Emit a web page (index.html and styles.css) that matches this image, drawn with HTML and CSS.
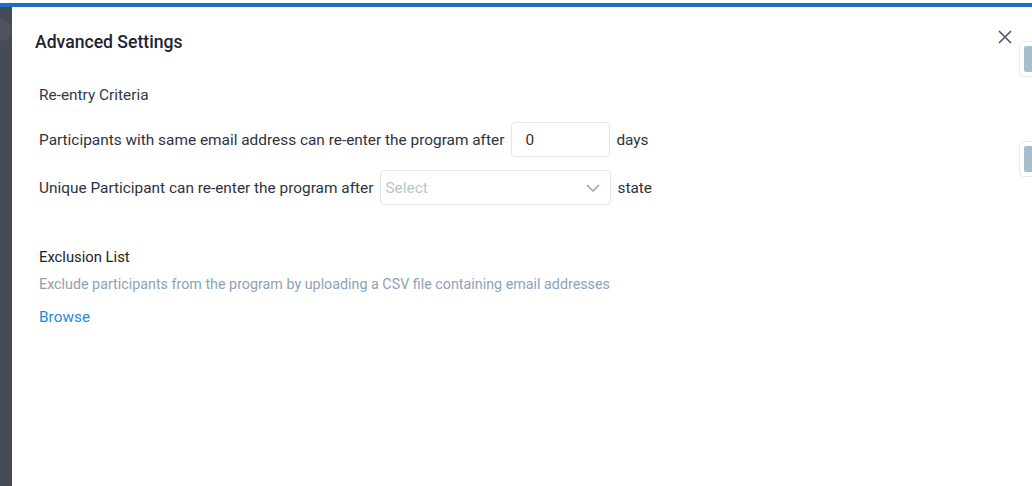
FILE: index.html
```html
<!DOCTYPE html>
<html>
<head>
<meta charset="utf-8">
<link rel="stylesheet" href="styles.css">
</head>
<body>
<div class="topgap"></div>
<div class="bluebar"></div>
<div class="layout">
  <aside class="strip"><div class="avatar"></div></aside>
  <main class="panel">
    <header class="panel-head">
      <h1 class="title">Advanced Settings</h1>
      <button class="close" aria-label="Close">
        <svg width="14" height="14" viewBox="0 0 14 14"><path d="M1 1L13 13M13 1L1 13" stroke="#4a5568" stroke-width="1.6" fill="none"/></svg>
      </button>
    </header>
    <section class="section">
      <div class="section-label">Re-entry Criteria</div>
      <div class="row row-first">
        <span class="txt">Participants with same email address can re-enter the program after</span>
        <div class="input num">0</div>
        <span class="txt unit">days</span>
      </div>
      <div class="row">
        <span class="txt">Unique Participant can re-enter the program after</span>
        <div class="input select">
          <span class="placeholder">Select</span>
          <svg width="14" height="8" viewBox="0 0 14 8"><path d="M1 1L7 7L13 1" stroke="#8fa5b9" stroke-width="1.5" fill="none"/></svg>
        </div>
        <span class="txt unit">state</span>
      </div>
    </section>
    <section class="section excl">
      <div class="section-label dark">Exclusion List</div>
      <div class="desc">Exclude participants from the program by uploading a CSV file containing email addresses</div>
      <a class="browse">Browse</a>
    </section>
  </main>
  <div class="edge-tab t1"><div class="tab-inner"></div></div>
  <div class="edge-tab t2"><div class="tab-inner"></div></div>
</div>
</body>
</html>
```

FILE: styles.css
```css
* { box-sizing: border-box; }
html, body { margin: 0; padding: 0; }
body {
  width: 1032px;
  height: 486px;
  overflow: hidden;
  background: #fff;
  font-family: Roboto, "Liberation Sans", sans-serif;
  color: #2d3340;
}
.topgap { height: 3px; background: #fff; }
.bluebar { height: 4px; background: #1c6fc6; }
.layout {
  position: relative;
  display: flex;
  height: 479px;
}
.strip {
  width: 12px;
  flex: none;
  background: #464c57;
  position: relative;
  overflow: hidden;
}
.avatar {
  position: absolute;
  left: -9px;
  top: 12px;
  width: 20px;
  height: 22px;
  border-radius: 50%;
  background: #4f545d;
}
.panel {
  flex: 1;
  padding: 0 0 0 23px;
}
.panel-head {
  display: flex;
  align-items: center;
  justify-content: space-between;
  height: 70px;
  padding-right: 20px;
}
.title {
  margin: 0;
  font-size: 17.6px;
  font-weight: 500;
  color: #1f2430;
}
.close {
  border: 0;
  background: none;
  padding: 0;
  margin-top: -10px;
  width: 14px;
  height: 14px;
  display: flex;
}
.section { padding-left: 4px; }
.section-label {
  font-size: 15.4px;
  line-height: 20px;
  color: #333a45;
  margin-top: 8px;
}
.section-label.dark { color: #222; font-size: 14.8px; }
.row {
  display: flex;
  align-items: center;
  gap: 7px;
  height: 35px;
  margin-top: 13px;
}
.row-first { margin-top: 17px; }
.txt { font-size: 15.4px; color: #2d3340; }
.unit { margin-left: -1px; }
.input {
  height: 35px;
  border: 1px solid #e1e6ec;
  border-radius: 4px;
  display: flex;
  align-items: center;
  font-size: 15.4px;
}
.num { width: 99px; padding-left: 13px; color: #2d3340; }
.select {
  width: 231px;
  padding: 0 10px 0 4px;
  justify-content: space-between;
}
.placeholder { color: #b6c4d2; }
.excl { margin-top: 42px; }
.excl .section-label { margin-top: 0; }
.desc {
  font-size: 14.3px;
  line-height: 20px;
  color: #8da2b6;
  margin-top: 7px;
}
.browse {
  display: block;
  font-size: 15.4px;
  line-height: 20px;
  color: #1d8bd8;
  margin-top: 13px;
}
.edge-tab {
  position: absolute;
  left: 1019px;
  width: 24px;
  height: 36px;
  border: 1px solid #e6e9ed;
  border-radius: 5px;
  background: #fff;
  padding: 4px;
}
.edge-tab.t1 { top: 34px; }
.edge-tab.t2 { top: 134px; }
.tab-inner {
  width: 100%;
  height: 100%;
  border-radius: 2px;
  background: #a7bfcb;
}
```
